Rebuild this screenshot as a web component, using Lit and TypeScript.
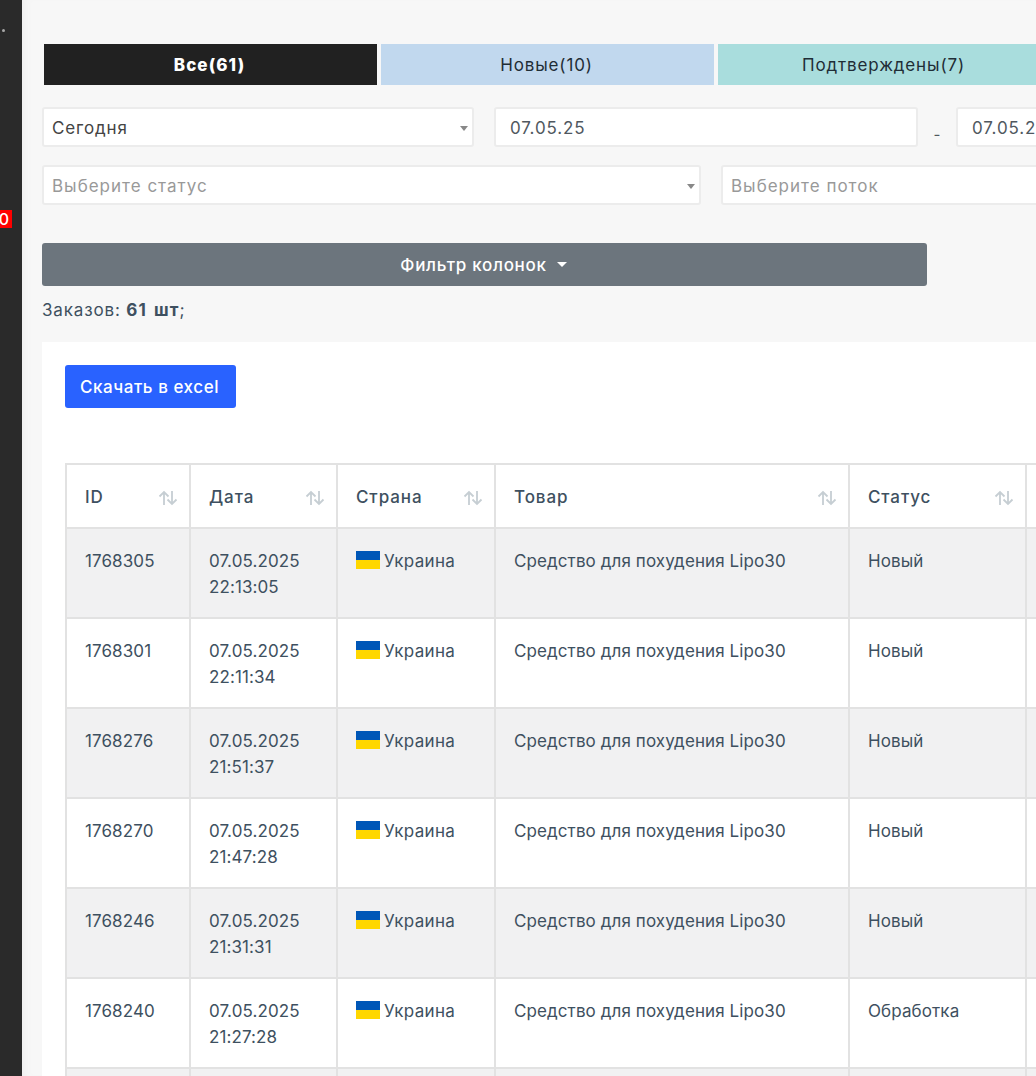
import { css, html, LitElement } from "lit";
import { customElement } from "lit/decorators.js";

type Order = { id: string; date: string; time: string; status: string };

const ORDERS: Order[] = [
  { id: "1768305", date: "07.05.2025", time: "22:13:05", status: "Новый" },
  { id: "1768301", date: "07.05.2025", time: "22:11:34", status: "Новый" },
  { id: "1768276", date: "07.05.2025", time: "21:51:37", status: "Новый" },
  { id: "1768270", date: "07.05.2025", time: "21:47:28", status: "Новый" },
  { id: "1768246", date: "07.05.2025", time: "21:31:31", status: "Новый" },
  { id: "1768240", date: "07.05.2025", time: "21:27:28", status: "Обработка" },
];

const HEADERS = ["ID", "Дата", "Страна", "Товар", "Статус"];

const sortIcon = html`
  <svg class="sort" viewBox="0 0 20 16" fill="none" stroke="currentColor" stroke-width="1.8">
    <path d="M6 15V2M1.500 6.500 6 2l4.500 4.500"></path>
    <path d="M14 1v13M9.500 9.500 14 14l4.500-4.500"></path>
  </svg>
`;

const flag = html`
  <svg class="flag" viewBox="0 0 24 18">
    <rect width="24" height="9" fill="#0057b7"></rect>
    <rect y="9" width="24" height="9" fill="#ffd700"></rect>
  </svg>
`;

@customElement("app-root")
export class AppRoot extends LitElement {
  static styles = css`
    * {
      box-sizing: border-box;
    }

    :host {
      display: flex;
      width: 1036px;
      height: 1076px;
      overflow: hidden;
      background: #f7f7f7;
      color: #3e5060;
      font-family: Inter, "Noto Sans", sans-serif;
      font-size: 17px;
    }

    .sidebar {
      flex: 0 0 22px;
      display: flex;
      flex-direction: column;
      align-items: flex-start;
      overflow: hidden;
      background: #2a2a2a;
      padding-top: 29px;
    }

    .dot {
      width: 3px;
      height: 3px;
      margin-left: 2px;
      border-radius: 50%;
      background: #a8a8a8;
    }

    .badge {
      width: 22px;
      height: 18px;
      margin: 178px 0 0 -10px;
      padding-right: 3px;
      background: #f00;
      color: #fff;
      font-size: 16px;
      font-weight: 500;
      line-height: 18px;
      text-align: right;
    }

    .main {
      flex: 0 0 1014px;
      min-width: 0;
      padding: 44px 0 0 20px;
      box-shadow: inset 8px 0 8px -6px #ececec;
    }

    .tabs {
      display: flex;
      gap: 4px;
      margin-left: 2px;
    }

    .tab {
      flex: 0 0 333px;
      height: 41px;
      padding-right: 2px;
      color: #1f2d36;
      font-size: 17px;
      letter-spacing: 0.85px;
      line-height: 42px;
      text-align: center;
    }

    .tab.all {
      background: #212121;
      color: #fff;
      font-weight: 800;
      letter-spacing: 1.1px;
    }

    .tab.new {
      background: #c1d8ee;
    }

    .tab.ok {
      background: #a9dddd;
    }

    .filters {
      display: flex;
      align-items: center;
      height: 40px;
      margin-top: 22px;
    }

    .filters.second {
      margin-top: 18px;
    }

    .spacer {
      flex: none;
      width: 20px;
    }

    .field {
      position: relative;
      flex: none;
      height: 40px;
      padding-left: 8px;
      border: 2px solid #ececec;
      border-radius: 3px;
      background: #fff;
      color: #444;
      font-size: 17px;
      letter-spacing: 0.85px;
      line-height: 39px;
      white-space: nowrap;
    }

    .field.date {
      padding-left: 14px;
      color: #50585f;
    }

    .field.muted {
      color: #999;
      letter-spacing: 1px;
    }

    .caret {
      position: absolute;
      top: 17px;
      right: 4px;
      border: 4px solid transparent;
      border-top: 5px solid #888;
      border-bottom: 0;
    }

    .dash {
      flex: 0 0 38px;
      padding-top: 14px;
      color: #50585f;
      font-size: 15px;
      text-align: center;
    }

    .column-filter {
      display: flex;
      align-items: center;
      justify-content: center;
      gap: 10px;
      width: 885px;
      height: 43px;
      margin-top: 38px;
      padding-right: 2px;
      border-radius: 3px;
      background: #6c757d;
      color: #fff;
      font-size: 17px;
      font-weight: 500;
      letter-spacing: 0.7px;
    }

    .column-filter i {
      border: 5px solid transparent;
      border-top: 5px solid #fff;
      border-bottom: 0;
    }

    .summary {
      margin-top: 13px;
      letter-spacing: 0.85px;
      line-height: 22px;
    }

    .summary b {
      letter-spacing: 1.1px;
      word-spacing: 2px;
    }

    .card {
      margin-top: 21px;
      padding: 23px 0 0 23px;
      background: #fff;
      height: 760px;
    }

    .excel {
      display: flex;
      align-items: center;
      justify-content: center;
      width: 171px;
      height: 43px;
      padding-right: 2px;
      border-radius: 3px;
      background: #2962ff;
      color: #fff;
      font-size: 17px;
      font-weight: 500;
      letter-spacing: 0.55px;
    }

    table {
      width: 1100px;
      margin-top: 55px;
      border-collapse: collapse;
      table-layout: fixed;
    }

    th,
    td {
      border: 2px solid #e2e2e2;
      padding: 0 17px 0 18px;
      text-align: left;
      vertical-align: top;
      letter-spacing: 0.1px;
    }

    th {
      position: relative;
      height: 64px;
      padding-top: 1px;
      font-weight: 500;
      letter-spacing: 0.9px;
      vertical-align: middle;
    }

    td {
      height: 90px;
      padding-top: 19px;
      line-height: 26px;
    }

    tbody tr:nth-child(odd) td {
      background: #f1f1f2;
    }

    .sort {
      position: absolute;
      top: 25px;
      right: 11px;
      width: 20px;
      height: 16px;
      color: #c6ced3;
    }

    .country {
      display: flex;
      align-items: flex-start;
      gap: 4px;
      letter-spacing: 0.3px;
    }

    .flag {
      flex: none;
      width: 24px;
      height: 18px;
      margin-top: 3px;
    }
  `;

  protected render() {
    return html`
      <aside class="sidebar">
        <div class="dot"></div>
        <div class="badge">10</div>
      </aside>
      <main class="main">
        <div class="tabs">
          <div class="tab all">Все(61)</div>
          <div class="tab new">Новые(10)</div>
          <div class="tab ok">Подтверждены(7)</div>
        </div>
        <div class="filters">
          <div class="field" style="width: 432px">Сегодня<span class="caret"></span></div>
          <div class="spacer"></div>
          <div class="field date" style="width: 424px">07.05.25</div>
          <div class="dash">-</div>
          <div class="field date" style="width: 200px">07.05.25</div>
        </div>
        <div class="filters second">
          <div class="field muted" style="width: 659px">Выберите статус<span class="caret"></span></div>
          <div class="spacer"></div>
          <div class="field muted" style="width: 400px">Выберите поток</div>
        </div>
        <div class="column-filter">Фильтр колонок <i></i></div>
        <div class="summary">Заказов: <b>61 шт</b>;</div>
        <section class="card">
          <div class="excel">Скачать в excel</div>
          <table>
            <colgroup>
              <col style="width: 124px" />
              <col style="width: 147px" />
              <col style="width: 158px" />
              <col style="width: 354px" />
              <col style="width: 177px" />
              <col style="width: 140px" />
            </colgroup>
            <thead>
              <tr>
                ${HEADERS.map((h) => html`<th>${h}${sortIcon}</th>`)}
                <th></th>
              </tr>
            </thead>
            <tbody>
              ${ORDERS.map(
                (o) => html`
                  <tr>
                    <td>${o.id}</td>
                    <td>${o.date}<br />${o.time}</td>
                    <td><div class="country">${flag}Украина</div></td>
                    <td>Средство для похудения Lipo30</td>
                    <td>${o.status}</td>
                    <td></td>
                  </tr>
                `
              )}
              <tr><td></td><td></td><td></td><td></td><td></td><td></td></tr>
            </tbody>
          </table>
        </section>
      </main>
    `;
  }
}
